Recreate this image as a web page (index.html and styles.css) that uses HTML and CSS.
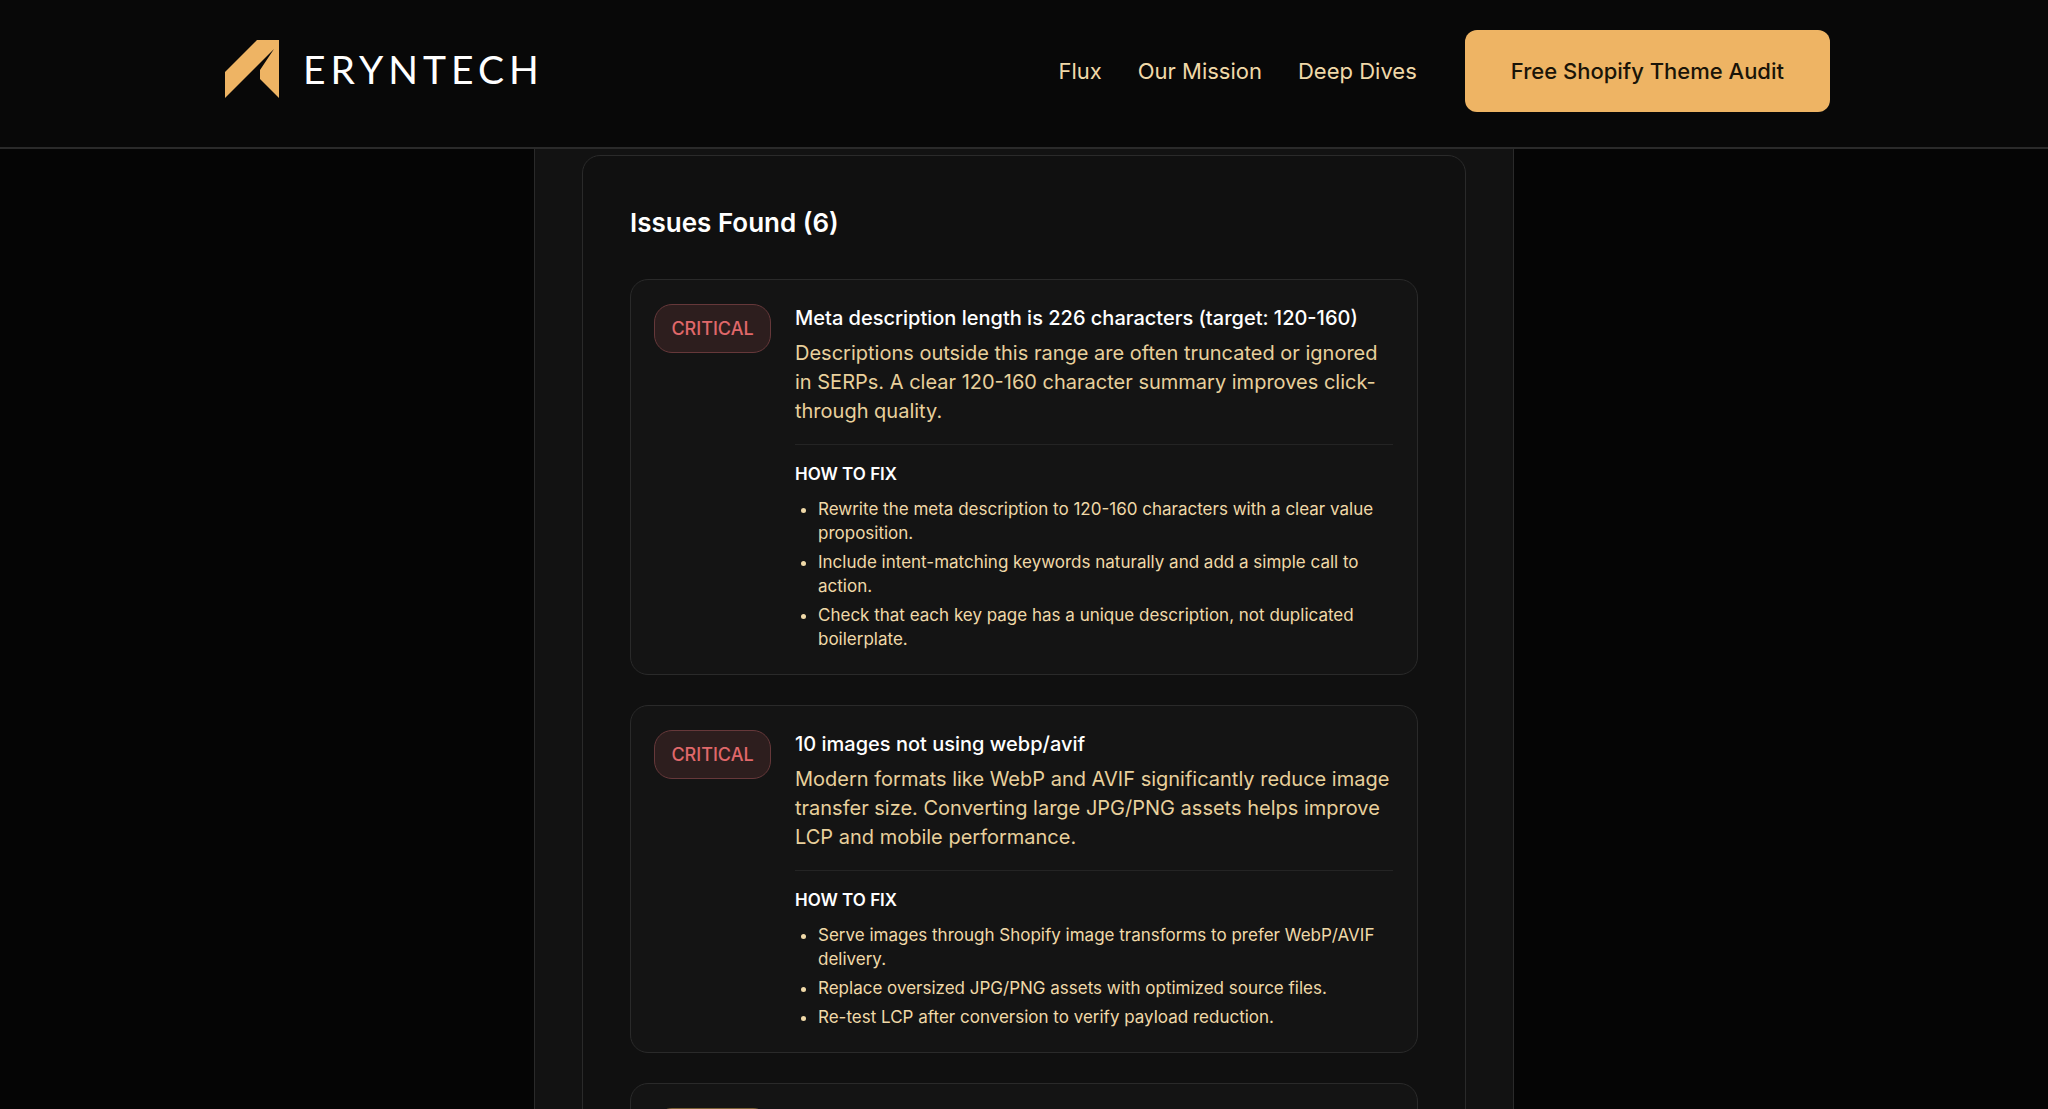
FILE: index.html
```html
<!DOCTYPE html>
<html lang="en">
<head>
    <meta charset="UTF-8">
    <meta name="viewport" content="width=device-width, initial-scale=1.0">
    <title>Free Shopify Theme Audit | Eryntech</title>
    <link rel="stylesheet" href="styles.css">
</head>
<body>
    <header class="site-header">
        <div class="header-inner">
            <a class="logo" href="#">
                <svg class="logo-mark" viewBox="0 0 54 58" aria-hidden="true">
                    <path d="M32 0H54V58L35 39V30L49 9L0 58V32Z" fill="#eeb464"/>
                </svg>
                <span class="logo-text">ERYNTECH</span>
            </a>
            <nav class="nav">
                <a href="#">Flux</a>
                <a href="#">Our Mission</a>
                <a href="#">Deep Dives</a>
                <a class="cta" href="#">Free Shopify Theme Audit</a>
            </nav>
        </div>
    </header>

    <main class="report">
        <section class="issues">
            <h2>Issues Found (6)</h2>

            <article class="issue">
                <span class="badge critical">CRITICAL</span>
                <div class="issue-body">
                    <h3>Meta description length is 226 characters (target: 120-160)</h3>
                    <p>Descriptions outside this range are often truncated or ignored in SERPs. A clear 120-160 character summary improves click-through quality.</p>
                    <div class="fix">
                        <h4>HOW TO FIX</h4>
                        <ul>
                            <li>Rewrite the meta description to 120-160 characters with a clear value proposition.</li>
                            <li>Include intent-matching keywords naturally and add a simple call to action.</li>
                            <li>Check that each key page has a unique description, not duplicated boilerplate.</li>
                        </ul>
                    </div>
                </div>
            </article>

            <article class="issue">
                <span class="badge critical">CRITICAL</span>
                <div class="issue-body">
                    <h3>10 images not using webp/avif</h3>
                    <p>Modern formats like WebP and AVIF significantly reduce image transfer size. Converting large JPG/PNG assets helps improve LCP and mobile performance.</p>
                    <div class="fix">
                        <h4>HOW TO FIX</h4>
                        <ul>
                            <li>Serve images through Shopify image transforms to prefer WebP/AVIF delivery.</li>
                            <li>Replace oversized JPG/PNG assets with optimized source files.</li>
                            <li>Re-test LCP after conversion to verify payload reduction.</li>
                        </ul>
                    </div>
                </div>
            </article>

            <article class="issue">
                <span class="badge warning"></span>
                <div class="issue-body"></div>
            </article>
        </section>
    </main>
</body>
</html>
```

FILE: styles.css
```css
* {
    box-sizing: border-box;
    margin: 0;
    padding: 0;
}

body {
    display: flex;
    flex-direction: column;
    height: 100vh;
    overflow: hidden;
    background-color: #050505;
    color: #fff;
    font-family: Inter, "Liberation Sans", sans-serif;
}

a {
    color: inherit;
    text-decoration: none;
}

/* Header */
.site-header {
    flex-shrink: 0;
    padding: 30px 24px 35px;
    background-color: #080808;
    border-bottom: 2px solid #2a2a2a;
}

.header-inner {
    display: flex;
    justify-content: space-between;
    align-items: center;
    max-width: 1612px;
    margin: 0 auto;
}

.logo {
    display: flex;
    align-items: center;
    gap: 24px;
    padding: 0 0 4px 7px;
}

.logo-mark {
    width: 54px;
    height: 58px;
}

.logo-text {
    font-family: Lato, sans-serif;
    font-size: 39px;
    font-weight: 400;
    line-height: 48px;
    letter-spacing: 5px;
}

.nav {
    display: flex;
    align-items: center;
    gap: 36px;
    color: #f0d9a8;
    font-size: 22px;
    line-height: 32px;
}

.cta {
    margin-left: 12px;
    padding: 25px 46px;
    border-radius: 12px;
    background-color: #eeb464;
    color: #1a1408;
    font-weight: 500;
}

/* Report */
.report {
    flex: 1;
    width: 100%;
    max-width: 980px;
    min-height: 0;
    margin: 0 auto;
    padding: 6px 47px 0;
    overflow: hidden;
    background-color: #121212;
    border: 1px solid #2a2a2a;
    border-width: 0 1px;
}

.issues {
    padding: 47px;
    background-color: #101010;
    border: 1px solid #2a2a2a;
    border-radius: 18px;
}

.issues h2 {
    margin-bottom: 36px;
    font-size: 26px;
    font-weight: 600;
    line-height: 40px;
}

.issue {
    display: flex;
    align-items: flex-start;
    gap: 24px;
    margin-bottom: 30px;
    padding: 24px 24px 23px 23px;
    background-color: #141414;
    border: 1px solid #2a2a2a;
    border-radius: 18px;
}

.badge {
    flex-shrink: 0;
    width: 117px;
    height: 49px;
    border: 1px solid;
    border-radius: 18px;
    font-size: 18px;
    font-weight: 500;
    line-height: 47px;
    text-align: center;
}

.critical {
    background-color: #2d1e1e;
    border-color: #66383a;
    color: #e0686a;
}

.warning {
    background-color: #2b2419;
    border-color: #7a6136;
}

.issue-body {
    flex: 1;
}

.issue h3 {
    margin-bottom: 6px;
    font-size: 20px;
    font-weight: 500;
    line-height: 29px;
}

.issue p {
    color: #e8d09c;
    font-size: 20px;
    line-height: 29px;
}

.fix {
    margin-top: 18px;
    padding-top: 17px;
    border-top: 1px solid #242424;
}

.fix h4 {
    margin-bottom: 11px;
    font-size: 17px;
    font-weight: 600;
    line-height: 24px;
}

.fix ul {
    padding-left: 23px;
    color: #f0d9a8;
    font-size: 17px;
    line-height: 24px;
}

.fix li + li {
    margin-top: 5px;
}
```
